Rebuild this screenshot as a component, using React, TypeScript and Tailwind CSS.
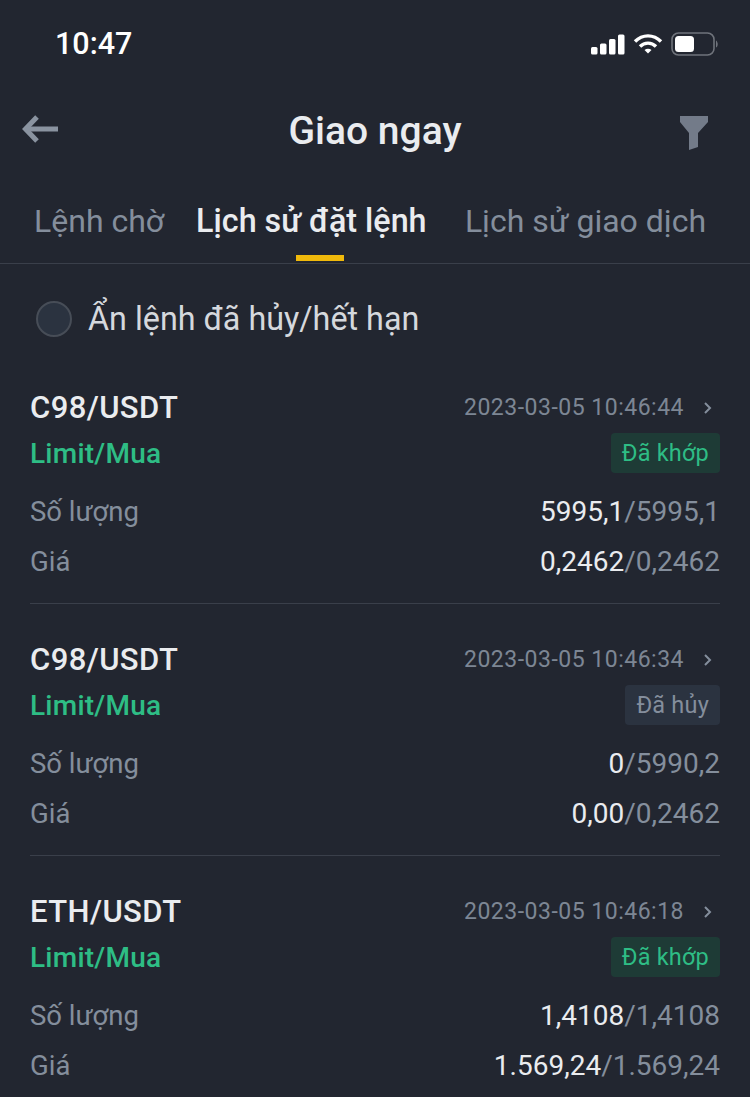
const orders = [
  { pair: "C98/USDT", time: "2023-03-05 10:46:44", status: "Đã khớp", filled: true, qty: ["5995,1", "5995,1"], price: ["0,2462", "0,2462"] },
  { pair: "C98/USDT", time: "2023-03-05 10:46:34", status: "Đã hủy", filled: false, qty: ["0", "5990,2"], price: ["0,00", "0,2462"] },
  { pair: "ETH/USDT", time: "2023-03-05 10:46:18", status: "Đã khớp", filled: true, qty: ["1,4108", "1,4108"], price: ["1.569,24", "1.569,24"] },
];

function StatusIcons() {
  return (
    <div className="flex items-center gap-[8px]">
      <svg width="35" height="21" viewBox="0 0 35 21" fill="#fff">
        <rect x="1" y="13" width="6.5" height="7.5" rx="1.5" />
        <rect x="10" y="9.5" width="6.5" height="11" rx="1.5" />
        <rect x="19" y="5" width="6.5" height="15.5" rx="1.5" />
        <rect x="28" y="0.5" width="6.5" height="20" rx="1.5" />
      </svg>
      <svg width="30" height="22" viewBox="0 0 30 22" fill="none" stroke="#fff" strokeWidth="3.4">
        <path d="M2 8.5 C9.5 1 20.5 1 28 8.5" />
        <path d="M7 13.5 C11.5 9 18.5 9 23 13.5" />
        <path d="M11.5 17 L15 20.5 L18.5 17 C16.5 15.2 13.5 15.2 11.5 17Z" fill="#fff" stroke="none" />
      </svg>
      <svg width="48" height="24" viewBox="0 0 48 24" fill="none">
        <rect x="1" y="1" width="42" height="22" rx="6.5" stroke="#6f737b" strokeWidth="1.6" />
        <rect x="4" y="4" width="19" height="16" rx="3.5" fill="#fff" />
        <path d="M45 8.5 C47 9.5 47.5 14.5 45 15.5Z" fill="#6f737b" />
      </svg>
    </div>
  );
}

function Value({ pair }: { pair: string[] }) {
  return (
    <div className="text-[28px]">
      <span className="text-[#eaecef]">{pair[0]}</span>
      <span className="text-[#848e9c]">/{pair[1]}</span>
    </div>
  );
}

function OrderCard({ order, last }: { order: (typeof orders)[number]; last: boolean }) {
  return (
    <div className={`mx-[30px] h-[252px] pt-[38px] ${last ? "" : "border-b border-[#3a3f4a]"}`}>
      <div className="flex h-[36px] items-center justify-between">
        <div className="text-[31px] font-medium tracking-[0.4px] text-[#eaecef]">{order.pair}</div>
        <div className="flex items-center gap-[19px] pr-[8px] text-[23px] tracking-[0.5px] text-[#7d8694]">
          <span>{order.time}</span>
          <svg width="9" height="14" viewBox="0 0 9 14" fill="none" stroke="#848e9c" strokeWidth="2">
            <path d="M2 2 L7 7 L2 12" />
          </svg>
        </div>
      </div>
      <div className="mt-[8px] flex h-[40px] items-center justify-between">
        <div className="text-[28px] font-medium tracking-[0.25px] text-[#2ebd85]">Limit/Mua</div>
        <div
          className={`-mt-[2px] flex h-[40px] items-center rounded-[4px] px-[11px] pt-[2px] text-[23.5px] tracking-[0.2px] ${
            order.filled ? "bg-[#1e3b36] text-[#2ebd85]" : "bg-[#2b3340] text-[#848e9c]"
          }`}
        >
          {order.status}
        </div>
      </div>
      <div className="mt-[13px] flex h-[50px] items-center justify-between text-[27.5px] text-[#848e9c]">
        <span>Số lượng</span>
        <Value pair={order.qty} />
      </div>
      <div className="flex h-[50px] items-center justify-between text-[27.5px] text-[#848e9c]">
        <span>Giá</span>
        <Value pair={order.price} />
      </div>
    </div>
  );
}

export default function App() {
  return (
    <div className="h-[1097px] w-[750px] overflow-hidden bg-[#222630] font-['Roboto',sans-serif]">
      <div className="flex h-[88px] items-center justify-between pl-[55px] pr-[31px]">
        <span className="text-[30.5px] font-medium text-white">10:47</span>
        <StatusIcons />
      </div>
      <div className="grid h-[86px] grid-cols-[1fr_auto_1fr] items-center pl-[22px] pr-[42px]">
        <svg className="-mt-[4px]" width="36" height="28" viewBox="0 0 36 28" fill="none" stroke="#8a93a0" strokeWidth="5">
          <path d="M36 14 H4" />
          <path d="M15 2 L3.5 14 L15 26" />
        </svg>
        <h1 className="pl-[20px] text-[39px] font-medium text-[#eaecef]">Giao ngay</h1>
        <svg className="mt-[4px] justify-self-end" width="28" height="34" viewBox="0 0 28 34" fill="#737b89">
          <path d="M0 0 H28 V6 L18 17 V31 L9 34 V17 L0 6Z" />
        </svg>
      </div>
      <div className="flex h-[90px] items-center border-b border-[#3a3f4a] pl-[34px] pr-[44px] pt-[4px] text-[32px] leading-[48px]">
        <span className="text-[#848e9c]">Lệnh chờ</span>
        <span className="relative ml-[32px] text-[32.3px] font-medium leading-[48px] text-[#eaecef]">
          Lịch sử đặt lệnh
          <span className="absolute left-[100px] top-[58px] h-[6px] w-[48px] bg-[#f0b90b]" />
        </span>
        <span className="ml-auto text-[#848e9c]">Lịch sử giao dịch</span>
      </div>
      <div className="flex h-[88px] items-center gap-[16px] pl-[36px] pt-[22px]">
        <div className="h-[36px] w-[36px] rounded-full border-2 border-[#474d57] bg-[#2b3340]" />
        <span className="text-[32.3px] text-[#d5d8dd]">Ẩn lệnh đã hủy/hết hạn</span>
      </div>
      {orders.map((o, i) => (
        <OrderCard key={i} order={o} last={i === orders.length - 1} />
      ))}
    </div>
  );
}
